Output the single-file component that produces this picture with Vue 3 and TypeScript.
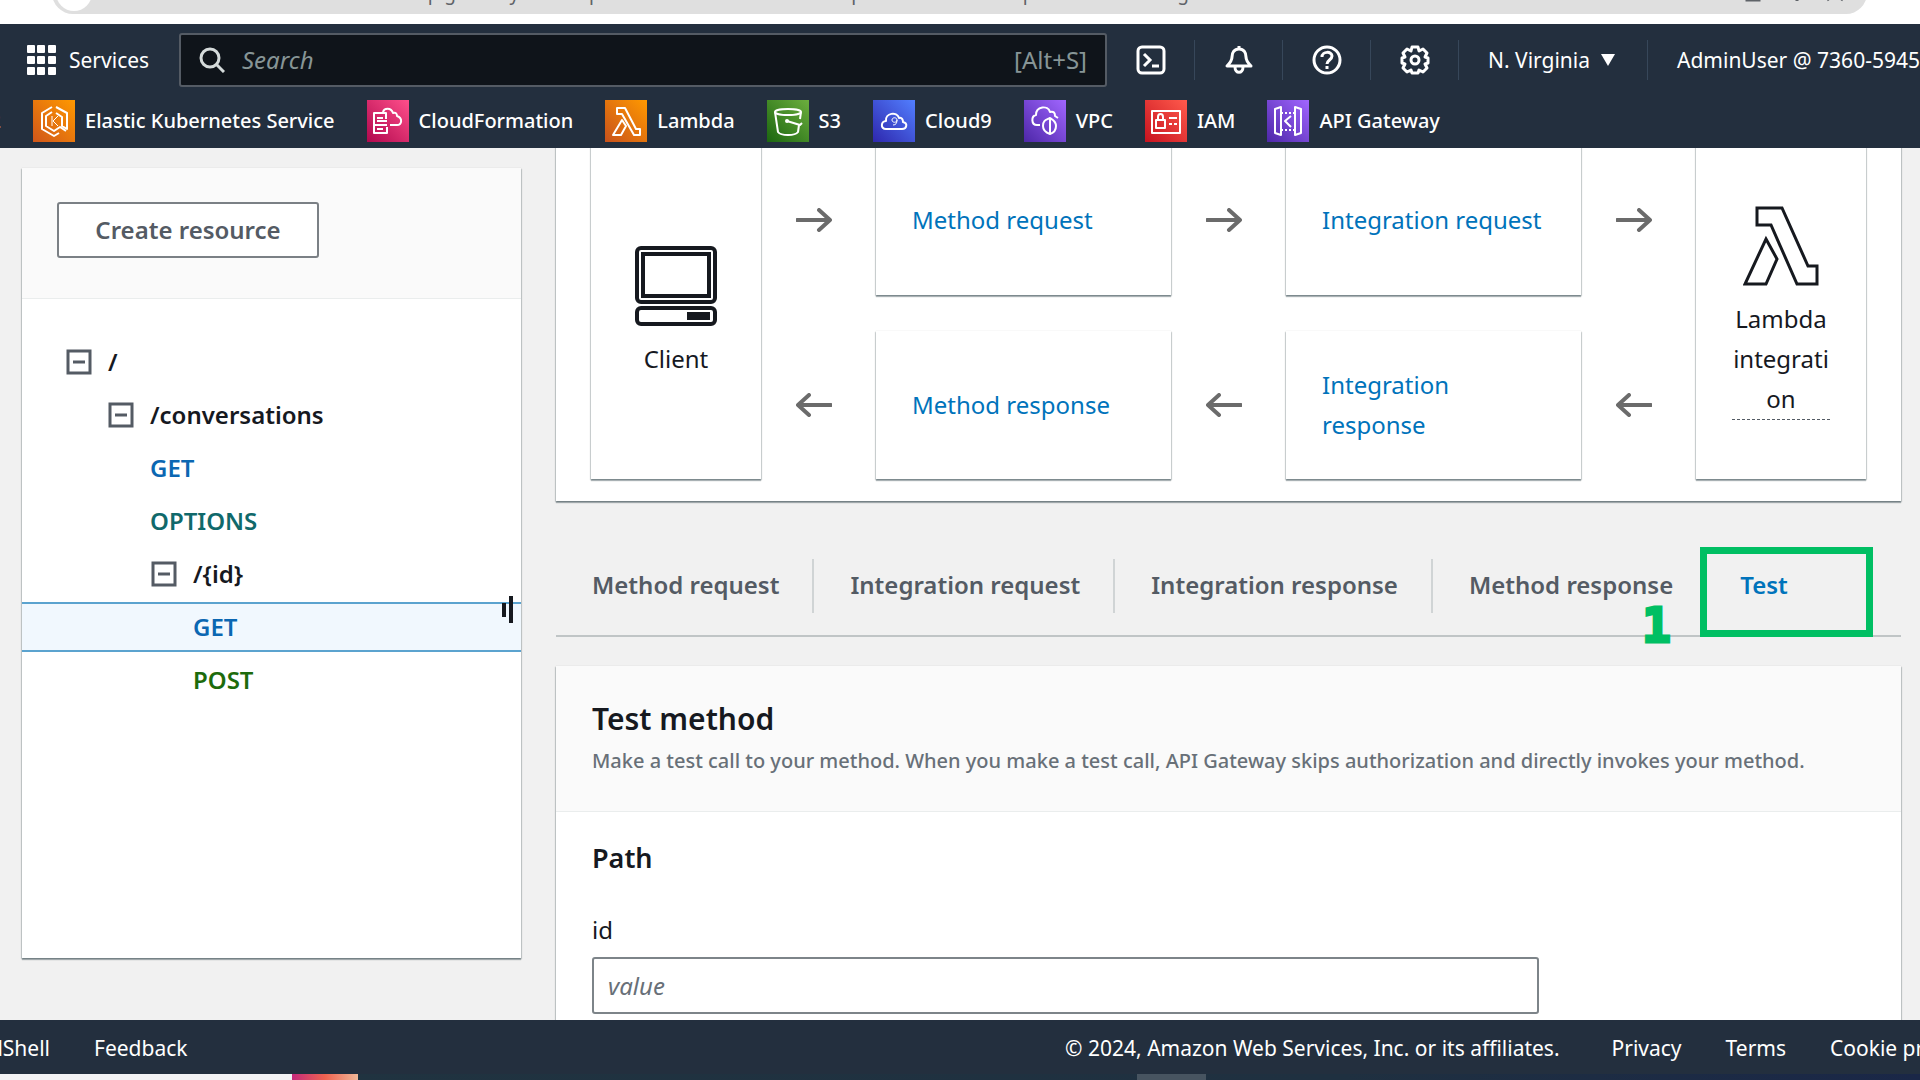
<script setup lang="ts">
interface Favorite {
  name: string
  icon: string
  from: string
  to: string
}

interface TreeRow {
  label: string
  level: number
  kind: 'path' | 'get' | 'options' | 'post'
  selected?: boolean
}

const favorites: Favorite[] = [
  { name: 'Elastic Kubernetes Service', icon: 'eks', from: '#d0561a', to: '#ff9900' },
  { name: 'CloudFormation', icon: 'cfn', from: '#b0084d', to: '#ff4f8b' },
  { name: 'Lambda', icon: 'lambda', from: '#c8511b', to: '#ff9900' },
  { name: 'S3', icon: 's3', from: '#1b660f', to: '#6cae3e' },
  { name: 'Cloud9', icon: 'cloud9', from: '#2e27ad', to: '#527fff' },
  { name: 'VPC', icon: 'vpc', from: '#4d27a8', to: '#a166ff' },
  { name: 'IAM', icon: 'iam', from: '#c7131f', to: '#ff5a4c' },
  { name: 'API Gateway', icon: 'apigw', from: '#4d27a8', to: '#a166ff' },
]

const tree: TreeRow[] = [
  { label: '/', level: 0, kind: 'path' },
  { label: '/conversations', level: 1, kind: 'path' },
  { label: 'GET', level: 1, kind: 'get' },
  { label: 'OPTIONS', level: 1, kind: 'options' },
  { label: '/{id}', level: 2, kind: 'path' },
  { label: 'GET', level: 2, kind: 'get', selected: true },
  { label: 'POST', level: 2, kind: 'post' },
]

const tabs = ['Method request', 'Integration request', 'Integration response', 'Method response', 'Test']
const activeTab = 'Test'
</script>

<template>
  <div class="app">
    <div class="browser-bar">
      <div class="address">
        <span class="site-dot"></span>
        <span class="url">/apigateway/main/apis/k3x0m8rv2e/resources/?api=k3x0m8rv2e&amp;experience=rest&amp;region=us-east-1</span>
        <svg class="bar-icons" viewBox="0 0 110 24" aria-hidden="true">
          <path d="M4 13h8M10 5h12v14H10z" />
          <path d="M60 8v12M90 19l8-6 8 6" />
        </svg>
      </div>
    </div>

    <header class="console-nav">
      <div class="nav-row">
        <button class="services" type="button">
          <svg width="29" height="30" viewBox="0 0 29 30" aria-hidden="true">
            <g fill="#fff">
              <rect x="0" y="0" width="8" height="8" rx="1" /><rect x="10" y="0" width="8" height="8" rx="1" /><rect x="21" y="0" width="8" height="8" rx="1" />
              <rect x="0" y="11" width="8" height="8" rx="1" /><rect x="10" y="11" width="8" height="8" rx="1" /><rect x="21" y="11" width="8" height="8" rx="1" />
              <rect x="0" y="22" width="8" height="8" rx="1" /><rect x="10" y="22" width="8" height="8" rx="1" /><rect x="21" y="22" width="8" height="8" rx="1" />
            </g>
          </svg>
          Services
        </button>
        <label class="search">
          <svg width="26" height="26" viewBox="0 0 26 26" fill="none" stroke="#d5dbdb" stroke-width="3" aria-hidden="true">
            <circle cx="11" cy="11" r="9" /><path d="M17 17l8 8" />
          </svg>
          <input type="text" placeholder="Search" aria-label="Search" />
          <span class="hint">[Alt+S]</span>
        </label>
        <div class="tools">
          <button type="button" aria-label="CloudShell">
            <svg width="30" height="30" viewBox="0 0 30 30" fill="none" stroke="#fff" stroke-width="3">
              <rect x="2" y="2" width="26" height="26" rx="4" /><path d="M8 9l6 6-6 6M16 21h7" />
            </svg>
          </button>
          <button type="button" aria-label="Notifications">
            <svg width="30" height="30" viewBox="0 0 30 30" fill="none" stroke="#fff" stroke-width="3" stroke-linejoin="round">
              <path d="M15 1v3M15 4c-5 0-7 4-7 8 0 4-2 6-5 9h24c-3-3-5-5-5-9 0-4-2-8-7-8zM11 22c0 7 8 7 8 0" />
            </svg>
          </button>
          <button type="button" aria-label="Help">
            <svg width="30" height="30" viewBox="0 0 30 30" fill="none" stroke="#fff" stroke-width="3">
              <circle cx="15" cy="15" r="13" />
              <path d="M10 12c0-6 10-6 10-1 0 4-5 4-5 8M15 21v3" />
            </svg>
          </button>
          <button type="button" aria-label="Settings">
            <svg width="30" height="30" viewBox="0 0 30 30" fill="none" stroke="#fff" stroke-width="3" stroke-linejoin="round">
              <path d="M12 2h6l1 4 4-2 4 4-2 4 3 1v5l-3 1 2 4-4 4-4-2-1 3h-6l-1-3-4 2-4-4 2-4-3-1v-5l3-1-2-4 4-4 4 2z" />
              <circle cx="15" cy="15" r="4" />
            </svg>
          </button>
        </div>
        <button class="region" type="button">
          N. Virginia
          <svg width="16" height="12" viewBox="0 0 16 12" aria-hidden="true"><path d="M1 0h14L8 12z" fill="#fff" /></svg>
        </button>
        <button class="account" type="button">AdminUser @ 7360-5945</button>
      </div>

      <nav class="favorites" aria-label="Favorites">
        <a class="clipped" href="#">EC2</a>
        <a v-for="fav in favorites" :key="fav.name" href="#">
          <span class="tile" :style="{ background: `linear-gradient(45deg, ${fav.from}, ${fav.to})` }">
            <svg viewBox="0 0 42 42" fill="none" stroke="#fff" stroke-width="2" stroke-linejoin="round">
              <template v-if="fav.icon === 'eks'">
                <path d="M19 7L9 13v16l12 7 5-3M23 7l11 6v16l-5-3V17l-6-4M19 12l-6 4v10l8 5 6-4 6 4" />
                <path d="M19 16v10M25 16l-5 5 5 5" stroke-width="1" />
              </template>
              <template v-else-if="fav.icon === 'cfn'">
                <path d="M20 27v6H7V13h12v6M7 25h13M10 18h6M10 21h10M10 29h6" />
                <path d="M16 12c1-4 8-5 10 1 3-1 4 1 4 3 6 2 5 9 0 9h-7" />
              </template>
              <path v-else-if="fav.icon === 'lambda'" d="M12 8h8l11 21h4v6h-6L17 14h-5zM17 20l4 6-5 9H8z" />
              <template v-else-if="fav.icon === 's3'">
                <ellipse cx="21" cy="12" rx="13" ry="3" /><path d="M8 12l3 20c3 4 17 4 20 0l1-7M34 12l-1 7" />
                <path d="M20 21l13 4 2-2" /><circle cx="20" cy="21" r="1" />
              </template>
              <template v-else-if="fav.icon === 'cloud9'">
                <path d="M13 29c-6 0-5-8 0-8-1-8 11-10 13-3 3-1 4 2 4 4 5 1 4 7-1 7z" />
                <path d="M24 20c0-3-5-3-5 0s5 3 5 0c0 3-1 5-4 5" stroke-width="1" />
              </template>
              <template v-else-if="fav.icon === 'vpc'">
                <path d="M16 25h-3c-6 0-6-9-1-10 0-9 12-10 14-3 4-1 5 1 5 4l3 2" />
                <path d="M26 18c-4 2-7 2-7 8 0 5 4 7 7 8 3-1 6-3 6-8s-3-6-6-8zM26 18v16" />
              </template>
              <template v-else-if="fav.icon === 'iam'">
                <rect x="7" y="11" width="28" height="22" /><rect x="11" y="20" width="9" height="8" />
                <path d="M13 20v-3c0-4 5-4 5 0v3M24 18h8M24 24h3M29 24h3" />
              </template>
              <template v-else>
                <path d="M8 9l6-2v28l-6-2zM34 9l-6-2v28l6-2zM24 16l-6 5 6 6" />
                <path d="M14 13h14M14 30h14" stroke-dasharray="2 2" />
              </template>
            </svg>
          </span>
          {{ fav.name }}
        </a>
      </nav>
    </header>

    <div class="body">
      <aside class="resources">
        <div class="resources-head">
          <button type="button">Create resource</button>
        </div>
        <ul class="tree">
          <li v-for="(row, i) in tree" :key="i" :class="[row.kind, 'level-' + row.level, { selected: row.selected }]">
            <svg v-if="row.kind === 'path'" width="26" height="26" viewBox="0 0 26 26" fill="none" stroke="#545b64" stroke-width="3" aria-hidden="true">
              <rect x="2" y="2" width="22" height="22" /><path d="M7 13h12" />
            </svg>
            <span v-if="row.kind === 'path'">{{ row.label }}</span>
            <a v-else href="#">{{ row.label }}</a>
          </li>
        </ul>
        <span class="resize-handle"><i></i><b></b></span>
      </aside>

      <main>
        <section class="diagram">
          <div class="node end">
            <svg width="82" height="80" viewBox="0 0 82 80" fill="none" stroke="#16191f" stroke-width="4" aria-hidden="true">
              <rect x="2" y="2" width="78" height="54" rx="4" /><rect x="8" y="8" width="66" height="42" />
              <rect x="2" y="62" width="78" height="16" rx="4" /><rect x="53" y="67" width="21" height="6" fill="#16191f" stroke-width="2" />
            </svg>
            <span>Client</span>
          </div>
          <div class="arrows">
            <svg viewBox="0 0 36 24"><path d="M1 12h32M23 2l11 10-11 10" /></svg>
            <svg viewBox="0 0 36 24"><path d="M35 12H3M13 2L2 12l11 10" /></svg>
          </div>
          <div class="steps">
            <div class="node"><a href="#">Method request</a></div>
            <div class="node"><a href="#">Method response</a></div>
          </div>
          <div class="arrows">
            <svg viewBox="0 0 36 24"><path d="M1 12h32M23 2l11 10-11 10" /></svg>
            <svg viewBox="0 0 36 24"><path d="M35 12H3M13 2L2 12l11 10" /></svg>
          </div>
          <div class="steps">
            <div class="node"><a href="#">Integration request</a></div>
            <div class="node"><a href="#">Integration response</a></div>
          </div>
          <div class="arrows">
            <svg viewBox="0 0 36 24"><path d="M1 12h32M23 2l11 10-11 10" /></svg>
            <svg viewBox="0 0 36 24"><path d="M35 12H3M13 2L2 12l11 10" /></svg>
          </div>
          <div class="node end">
            <svg width="76" height="80" viewBox="0 0 76 80" fill="none" stroke="#16191f" stroke-width="3" aria-hidden="true">
              <path d="M14 2h25l26 58h9v18H54L28 19H14zM23 33l11 20-11 25H2z" />
            </svg>
            <span class="dashed">Lambda integrati<wbr />on</span>
          </div>
        </section>

        <div class="tabs" role="tablist">
          <button v-for="tab in tabs" :key="tab" type="button" role="tab" :aria-selected="tab === activeTab" :class="{ active: tab === activeTab }">
            <span>{{ tab }}</span>
          </button>
          <span class="step-mark">1</span>
        </div>

        <section class="test">
          <div class="test-head">
            <h2>Test method</h2>
            <p>Make a test call to your method. When you make a test call, API Gateway skips authorization and directly invokes your method.</p>
          </div>
          <div class="test-form">
            <h3>Path</h3>
            <label for="path-id">id</label>
            <input id="path-id" type="text" placeholder="value" />
          </div>
        </section>
      </main>
    </div>

    <footer class="console-footer">
      <a class="shell" href="#">CloudShell</a>
      <a href="#">Feedback</a>
      <span class="copyright">© 2024, Amazon Web Services, Inc. or its affiliates.</span>
      <a href="#">Privacy</a>
      <a href="#">Terms</a>
      <a class="cookies" href="#">Cookie preferences</a>
    </footer>
    <div class="taskbar"><span class="light"></span><span class="app-icon"></span><span class="open-app"></span></div>
  </div>
</template>

<style>
body {
  margin: 0;
  overflow: hidden;
}
</style>

<style scoped>
* {
  box-sizing: border-box;
}

.app {
  display: flex;
  flex-direction: column;
  height: 100vh;
  overflow: hidden;
  background: #f1f1f1;
  color: #16191f;
  font: 24px/40px 'Noto Sans', 'Open Sans', sans-serif;
}

a {
  color: #0073bb;
  text-decoration: none;
}

button {
  padding: 0;
  border: 0;
  background: none;
  color: inherit;
  font: inherit;
  white-space: nowrap;
}

.browser-bar {
  display: flex;
  align-items: flex-end;
  flex: none;
  height: 24px;
  padding: 0 53px 10px 52px;
  overflow: hidden;
  background: #fff;
}

.address {
  display: flex;
  align-items: center;
  flex: 1;
  height: 42px;
  border-radius: 21px;
  background: #dfdfdf;
  color: #5f6368;
  font-size: 19px;
}

.site-dot {
  width: 36px;
  height: 36px;
  margin-left: 4px;
  border-radius: 50%;
  background: #fff;
}

.url {
  flex: 1;
  margin-left: 318px;
  white-space: nowrap;
}

.bar-icons {
  width: 110px;
  height: 24px;
  margin-right: 20px;
  fill: none;
  stroke: #5f6368;
  stroke-width: 3;
}

.console-nav {
  flex: none;
  height: 124px;
  overflow: hidden;
  background: #232f3e;
  color: #fff;
  font-size: 21px;
}

.nav-row {
  display: flex;
  align-items: center;
  height: 72px;
}

.services {
  display: flex;
  align-items: center;
  width: 152px;
  gap: 13px;
  margin-left: 27px;
}

.search {
  display: flex;
  align-items: center;
  flex: 1;
  height: 54px;
  padding: 0 18px;
  gap: 15px;
  border: 2px solid #545b64;
  border-radius: 3px;
  background: #0f141a;
  color: #879596;
  font-size: 24px;
}

.search input {
  flex: 1;
  min-width: 0;
  border: 0;
  outline: 0;
  background: none;
  color: #fff;
  font: inherit;
}

.search input::placeholder {
  color: #879596;
  font-style: italic;
}

.tools {
  display: flex;
}

.tools button {
  display: flex;
  align-items: center;
  justify-content: center;
  width: 88px;
  height: 40px;
  border-right: 1px solid #37475a;
}

.region {
  display: flex;
  align-items: center;
  width: 189px;
  height: 40px;
  padding-left: 29px;
  gap: 10px;
  border-right: 1px solid #37475a;
}

.account {
  width: 272px;
  padding-left: 29px;
  overflow: hidden;
  text-align: left;
}

.favorites {
  display: flex;
  align-items: center;
  height: 50px;
  gap: 32px;
  font-size: 20px;
  font-weight: 500;
}

.favorites a {
  display: flex;
  align-items: center;
  flex: none;
  gap: 10px;
  color: #fff;
}

.favorites .clipped {
  justify-content: flex-end;
  width: 1px;
}

.tile {
  width: 42px;
  height: 42px;
}

.tile svg {
  display: block;
}

.body {
  display: flex;
  flex: 1;
  min-height: 0;
  padding: 0 19px 0 22px;
  gap: 35px;
  overflow: hidden;
}

.resources,
.diagram,
.test,
.node {
  background: #fff;
  box-shadow: 0 0 1px rgba(0, 28, 36, 0.15), 0 2px 1px rgba(0, 28, 36, 0.3), 1px 1px 1px rgba(0, 28, 36, 0.15), -1px 1px 1px rgba(0, 28, 36, 0.15);
}

.resources {
  position: relative;
  flex: none;
  width: 499px;
  height: 790px;
  margin-top: 20px;
}

.resources-head {
  height: 131px;
  padding: 34px 35px;
  border-bottom: 1px solid #eaeded;
  background: #fafafa;
}

.resources-head button {
  width: 262px;
  height: 56px;
  border: 2px solid #7b8085;
  border-radius: 3px;
  background: #fff;
  color: #545b64;
  font-weight: 600;
}

.tree {
  margin: 0;
  padding: 38px 0 0;
  list-style: none;
}

.tree li {
  display: flex;
  align-items: center;
  height: 50px;
  margin-bottom: 3px;
  gap: 16px;
  font-weight: 600;
}

.level-0 {
  padding-left: 44px;
}

.level-1 {
  padding-left: 128px;
}

.level-2 {
  padding-left: 171px;
}

.level-1.path {
  padding-left: 86px;
}

.level-2.path {
  padding-left: 129px;
}

.get a {
  color: #0b67b2;
}

.options a {
  color: #10696b;
}

.post a {
  color: #1d6b0c;
}

.tree .selected {
  border-top: 2px solid #5ba3cf;
  border-bottom: 2px solid #5ba3cf;
  background: #f1f8fe;
}

.resize-handle {
  position: absolute;
  top: 428px;
  right: 8px;
  display: flex;
  align-items: center;
  gap: 3px;
}

.resize-handle i {
  width: 4px;
  height: 14px;
  background: #16191f;
}

.resize-handle b {
  width: 4px;
  height: 27px;
  background: #16191f;
}

main {
  flex: 1;
  min-width: 0;
}

.diagram {
  display: flex;
  height: 358px;
  margin-top: -5px;
  padding: 3px 35px 22px 35px;
}

.diagram .end {
  display: flex;
  flex-direction: column;
  align-items: center;
  justify-content: center;
  gap: 13px;
  width: 170px;
  text-align: center;
}

.dashed {
  width: 98px;
  border-bottom: 1px dashed #545b64;
}

.arrows,
.steps {
  display: flex;
  flex-direction: column;
  gap: 36px;
}

.arrows {
  width: 115px;
  padding-right: 10px;
  align-items: center;
  justify-content: space-around;
}

.arrows svg {
  width: 36px;
  height: 24px;
  fill: none;
  stroke: #6b6b6b;
  stroke-width: 4;
  stroke-linecap: round;
  stroke-linejoin: round;
}

.steps {
  flex: 1;
}

.steps .node {
  display: flex;
  align-items: center;
  flex: 1;
  padding: 0 36px;
}

.tabs {
  position: relative;
  display: flex;
  height: 90px;
  margin-top: 46px;
  border-bottom: 2px solid #c0c5c6;
}

.tabs button {
  display: flex;
  align-items: flex-start;
  padding-top: 12px;
  color: #545b64;
  font-weight: 600;
}

.tabs button span {
  height: 54px;
  padding: 6px 33px 6px 36px;
  border-right: 2px solid #d0d4d5;
}

.tabs button:nth-child(4) span {
  padding-right: 27px;
  border-right: 0;
}

.tabs .active {
  width: 173px;
  height: 90px;
  padding-top: 5px;
  border: 7px solid #00bf63;
  color: #0073bb;
}

.tabs .active span {
  padding: 6px 33px;
  border-right: 0;
}

.step-mark {
  position: absolute;
  top: 58px;
  right: 230px;
  color: #00bf63;
  font: bold 48px/40px 'DejaVu Sans Mono', monospace;
  -webkit-text-stroke: 3px #00bf63;
}

.test {
  height: 500px;
  margin-top: 29px;
}

.test-head {
  height: 146px;
  padding: 33px 36px;
  border-bottom: 1px solid #eaeded;
  background: #fafafa;
}

h2 {
  margin: 0;
  font-size: 30px;
  font-weight: 600;
  line-height: 40px;
}

.test-head p {
  margin: 6px 0 0;
  color: #687078;
  font-size: 20px;
  font-weight: 500;
  line-height: 32px;
  white-space: nowrap;
}

.test-form {
  padding: 26px 36px;
}

h3 {
  margin: 0 0 32px;
  font-size: 27px;
  font-weight: 600;
  line-height: 40px;
}

.test-form label {
  display: block;
}

.test-form input {
  width: 100%;
  max-width: 947px;
  height: 57px;
  margin-top: 7px;
  padding: 0 14px;
  border: 2px solid #7d8489;
  border-radius: 3px;
  font: inherit;
}

.test-form input::placeholder {
  color: #687078;
  font-style: italic;
}

.console-footer {
  display: flex;
  align-items: center;
  flex: none;
  height: 54px;
  padding-top: 2px;
  gap: 44px;
  overflow: hidden;
  background: #232f3e;
  color: #fff;
  font-size: 21px;
  white-space: nowrap;
}

.console-footer a {
  color: #fff;
}

.console-footer .shell {
  display: flex;
  justify-content: flex-end;
  width: 50px;
}

.copyright {
  margin-left: auto;
  margin-right: 8px;
}

.cookies {
  width: 90px;
}

.taskbar {
  display: flex;
  flex: none;
  height: 6px;
  background: linear-gradient(90deg, #203440, #1f3040 70%, #1a2747);
}

.light {
  width: 292px;
  background: #f3f3f5;
}

.app-icon {
  width: 66px;
  background: linear-gradient(90deg, #c52a7c, #ef6350 50%, #f0b898);
}

.open-app {
  width: 69px;
  margin-left: 779px;
  background: #475460;
}
</style>
